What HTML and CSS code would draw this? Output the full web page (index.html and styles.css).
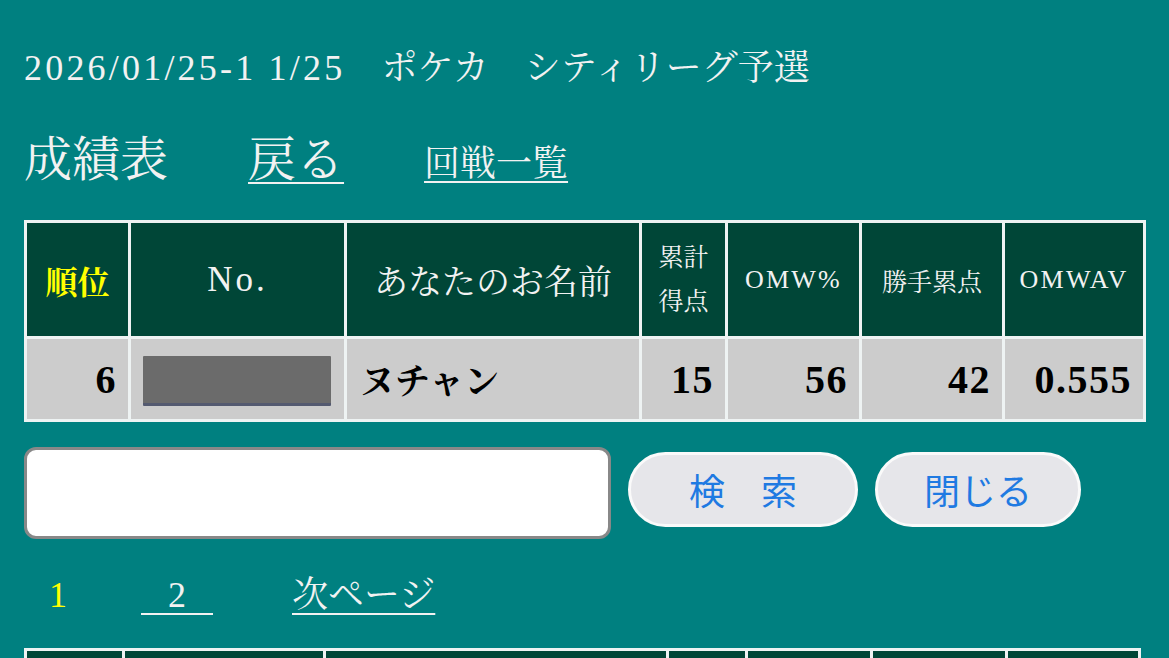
FILE: index.html
```html
<!DOCTYPE html>
<html lang="ja">
<head>
<meta charset="utf-8">
<title>成績表</title>
<link rel="stylesheet" href="styles.css">
</head>
<body>
<div class="page">
  <div class="title"><span class="lat">2026/01/25-1 1/25</span>　ポケカ　シティリーグ予選</div>
  <div class="headline">
    <span class="hl-main">成績表</span>
    <a class="hl-back" href="#">戻る</a>
    <a class="hl-list" href="#">回戦一覧</a>
  </div>
  <table class="grid grid1">
    <colgroup>
      <col class="c1"><col class="c2"><col class="c3"><col class="c4"><col class="c5"><col class="c6"><col class="c7">
    </colgroup>
    <tr class="head">
      <th class="rank">順位</th>
      <th class="big lat">No.</th>
      <th class="big">あなたのお名前</th>
      <th class="small two">累計<br>得点</th>
      <th class="small lat">OMW%</th>
      <th class="small">勝手累点</th>
      <th class="small lat">OMWAV</th>
    </tr>
    <tr class="data">
      <td class="num">6</td>
      <td class="nocell"><div class="redact"></div></td>
      <td class="name">ヌチャン</td>
      <td class="num">15</td>
      <td class="num">56</td>
      <td class="num">42</td>
      <td class="num">0.555</td>
    </tr>
  </table>
  <div class="search">
    <div class="input"></div>
    <button class="btn btn-search">検　索</button>
    <button class="btn btn-close">閉じる</button>
  </div>
  <div class="pager">
    <span class="cur">1</span>
    <a href="#" class="pg">&ensp;&nbsp;2&ensp;&nbsp;</a>
    <a href="#" class="pg">次ページ</a>
  </div>
  <table class="grid grid2">
    <colgroup>
      <col class="d1"><col class="d2"><col class="d3"><col class="d4"><col class="d5"><col class="d6"><col class="d7">
    </colgroup>
    <tr class="head">
      <th></th><th></th><th></th><th></th><th></th><th></th><th></th>
    </tr>
  </table>
</div>
</body>
</html>
```
FILE: styles.css
```css
* { box-sizing: border-box; }
html, body {
  margin: 0;
  padding: 0;
  background: #008080;
  overflow: hidden;
}
body {
  font-family: "Liberation Serif", "Noto Serif CJK JP", "Noto Sans CJK JP", serif;
  color: #f2f2f2;
}
.page {
  padding: 44px 0 0 24px;
}
.title {
  font-size: 36px;
  line-height: 48px;
  height: 48px;
  white-space: nowrap;
}
.title .lat {
  letter-spacing: 3.2px;
}
.headline {
  margin-top: 38px;
  height: 60px;
  display: flex;
  align-items: baseline;
  line-height: 60px;
}
.hl-main {
  font-size: 48px;
}
.hl-back {
  font-size: 48px;
  margin-left: 80px;
  color: #f2f2f2;
  text-decoration: underline;
  text-decoration-thickness: 2px;
  text-underline-offset: 6px;
}
.hl-list {
  font-size: 36px;
  margin-left: 80px;
  color: #f2f2f2;
  text-decoration: underline;
  text-decoration-thickness: 2px;
  text-underline-offset: 5px;
}
.grid {
  table-layout: fixed;
  border-collapse: separate;
  border-spacing: 3px;
  background: #eef3f3;
  margin-top: 30px;
}
.grid1 { width: 1122px; }
.c1 { width: 101px; }
.c2 { width: 213px; }
.c3 { width: 292px; }
.c4 { width: 83px; }
.c5 { width: 131px; }
.c6 { width: 140px; }
.c7 { width: 138px; }
.grid th, .grid td { padding: 0; }
.head th {
  background: #004637;
  height: 113px;
  font-weight: normal;
  text-align: center;
  vertical-align: middle;
  color: #f2f2f2;
  white-space: nowrap;
}
.head .rank {
  color: #ffff00;
  font-weight: bold;
  font-size: 32px;
}
.head .big { font-size: 34px; }
.head .big.lat { letter-spacing: 3px; font-size: 35px; }
.head .small { font-size: 25px; }
.head .small.lat { letter-spacing: 2.2px; font-size: 26px; }
.head .two { line-height: 44px; }
.data td {
  background: #cccccc;
  height: 80px;
  color: #000;
  font-weight: bold;
  font-size: 40px;
  letter-spacing: 1.5px;
  vertical-align: middle;
}
.data .num {
  text-align: right;
  padding-right: 11px;
}
.data .name {
  text-align: left;
  padding-left: 13px;
  font-size: 35px;
  letter-spacing: 0;
}
.data .nocell {
  padding: 0 12px 0 12px;
}
.redact {
  width: 188px;
  height: 50px;
  margin-top: 4px;
  background: #6b6b6b;
  border-bottom: 3px solid #545a70;
  border-radius: 1px;
}
.search {
  display: flex;
  align-items: center;
  margin-top: 25px;
  height: 92px;
}
.input {
  width: 587px;
  height: 92px;
  background: #fff;
  border: 3px solid #888;
  border-radius: 12px;
}
.btn {
  margin-left: 17px;
  height: 75px;
  border: 3px solid #fafafa;
  border-radius: 38px;
  background: #e6e6ea;
  color: #1f7ae2;
  font-family: "Noto Sans CJK JP", "Noto Sans", sans-serif;
  font-size: 36px;
  line-height: 1;
  padding: 0;
  margin-top: -8px;
}
.btn-search { width: 230px; }
.btn-close { width: 206px; }
.pager {
  margin-top: 32px;
  height: 48px;
  line-height: 48px;
  font-size: 36px;
  display: flex;
  align-items: baseline;
  padding-left: 25px;
}
.cur {
  color: #ffff00;
  margin-right: 74px;
}
.pg {
  color: #f2f2f2;
  text-decoration: underline;
  text-decoration-thickness: 2px;
  text-underline-offset: 6px;
  margin-right: 79px;
  white-space: pre;
}
.grid2 {
  margin-top: 29px;
  width: 1117px;
}
.d1 { width: 95px; }
.d2 { width: 198px; }
.d3 { width: 340px; }
.d4 { width: 76px; }
.d5 { width: 122px; }
.d6 { width: 132px; }
.d7 { width: 130px; }
```
